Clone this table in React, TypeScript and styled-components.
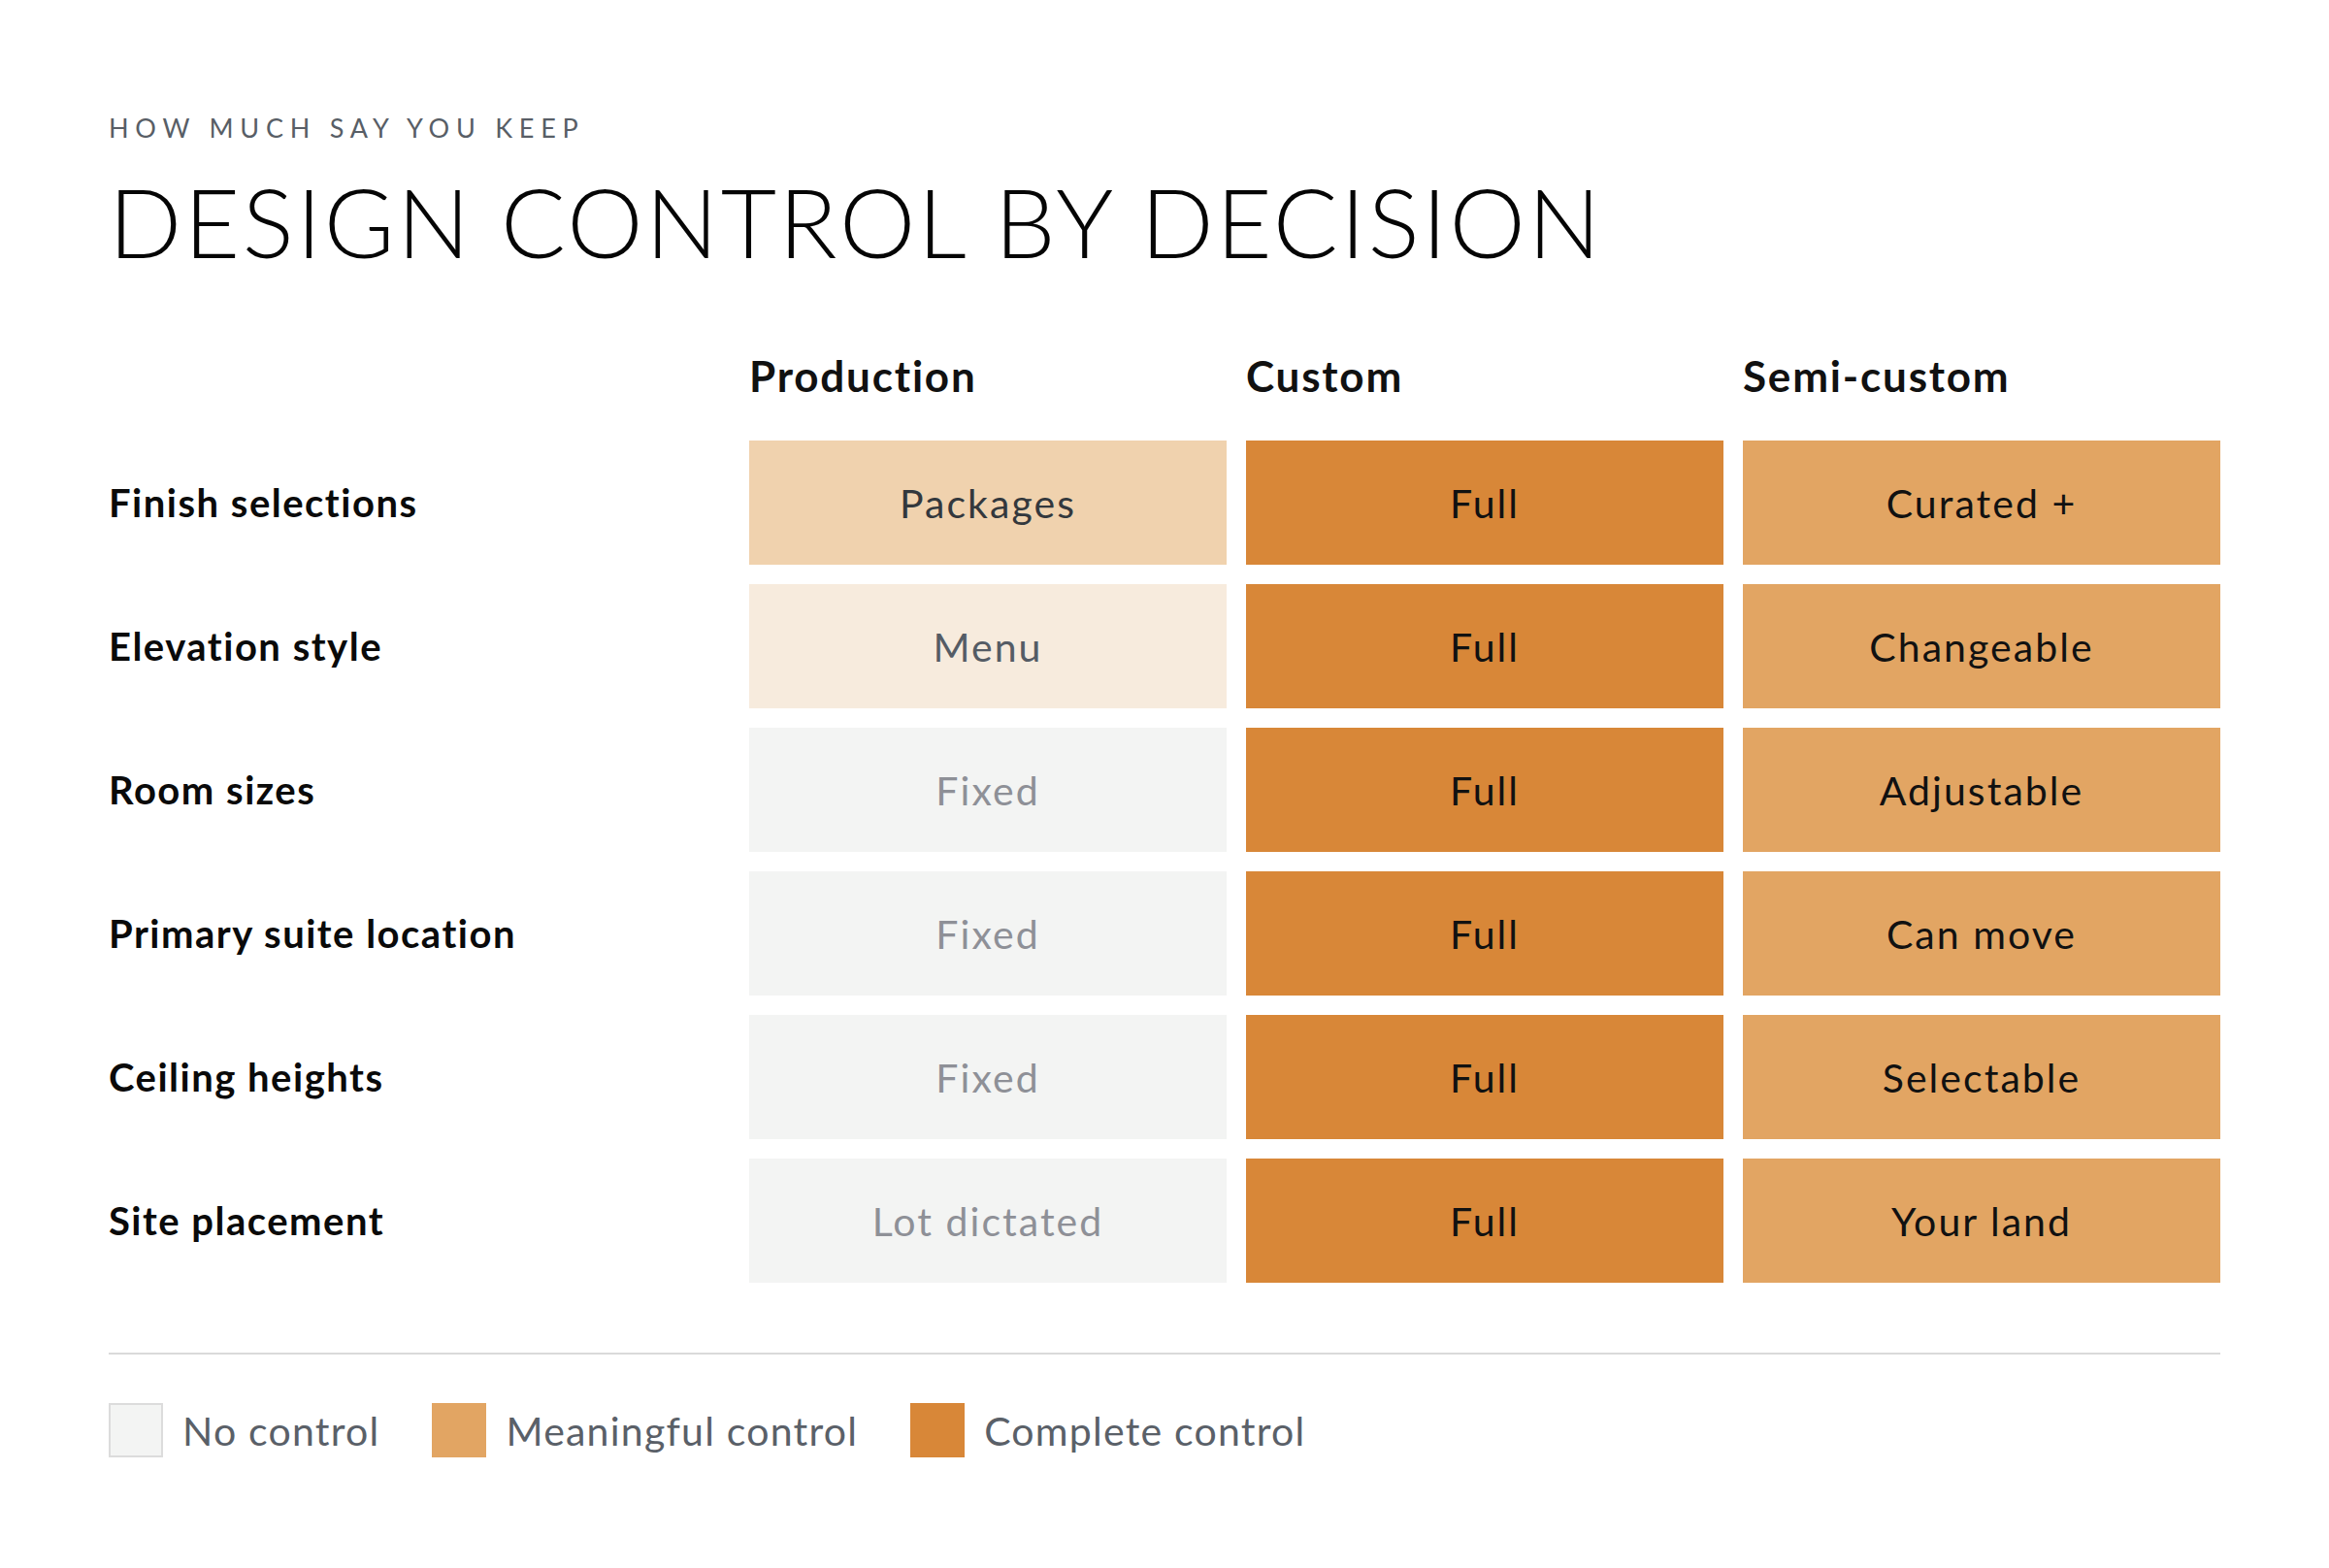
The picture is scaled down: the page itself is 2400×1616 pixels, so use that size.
import styled, { createGlobalStyle } from "styled-components"

const GlobalStyle = createGlobalStyle`
  html, body {
    margin: 0;
    padding: 0;
    background: #ffffff;
  }
  body {
    font-family: "Lato", "Noto Sans", sans-serif;
    color: #111111;
  }
`

// page wrapper, all content sits between x=112 and x=2288
const Page = styled.div`
  width: 2400px;
  min-height: 1616px;
  box-sizing: border-box;
  padding: 118px 112px 0;
`

const Eyebrow = styled.div`
  font-size: 27px;
  line-height: 1;
  letter-spacing: 0.25em;
  color: #585e66;
  text-transform: uppercase;
`

const Title = styled.h1`
  margin: 33px 0 0;
  font-size: 99px;
  line-height: 1;
  font-weight: 300;
  letter-spacing: 2.6px;
  color: #050505;
`

const Grid = styled.div`
  margin-top: 88px;
  display: grid;
  grid-template-columns: 1fr 492px 492px 492px;
  grid-template-rows: auto;
  grid-auto-rows: 128px;
  column-gap: 20px;
  row-gap: 20px;
`

const Row = styled.div`
  display: contents;
`

const Head = styled.div`
  font-size: 44px;
  line-height: 1;
  font-weight: 700;
  letter-spacing: 1.8px;
  padding-bottom: 25px;
  align-self: end;
`

const Label = styled.div`
  display: flex;
  align-items: center;
  font-size: 40px;
  font-weight: 700;
  letter-spacing: 1.5px;
  color: #0a0a0a;
`

type Level = "none" | "menu" | "packages" | "meaningful" | "complete"

const fills: Record<Level, { bg: string; fg: string }> = {
  none: { bg: "#f3f4f3", fg: "#8e9097" },
  menu: { bg: "#f7ebdd", fg: "#555c65" },
  packages: { bg: "#f0d2ae", fg: "#33383d" },
  meaningful: { bg: "#e2a563", fg: "#111111" },
  complete: { bg: "#d88738", fg: "#111111" },
}

const Cell = styled.div<{ $level: Level }>`
  display: flex;
  align-items: center;
  justify-content: center;
  font-size: 41px;
  letter-spacing: 0.05em;
  background: ${(p) => fills[p.$level].bg};
  color: ${(p) => fills[p.$level].fg};
`

const Divider = styled.hr`
  margin: 72px 0 0;
  border: none;
  height: 2px;
  background: #dadada;
`

const Legend = styled.div`
  margin-top: 50px;
  display: flex;
  align-items: center;
  gap: 54px;
`

const LegendItem = styled.div`
  display: flex;
  align-items: center;
  gap: 20px;
  font-size: 41px;
  letter-spacing: 0.03em;
  color: #5a6068;
`

const Swatch = styled.span<{ $level: Level }>`
  width: 52px;
  height: 52px;
  flex: none;
  background: ${(p) => fills[p.$level].bg};
  border: ${(p) => (p.$level === "none" ? "2px solid #dcdcdc" : "2px solid transparent")};
`

const rows: { label: string; cells: [string, Level][] }[] = [
  { label: "Finish selections", cells: [["Packages", "packages"], ["Full", "complete"], ["Curated +", "meaningful"]] },
  { label: "Elevation style", cells: [["Menu", "menu"], ["Full", "complete"], ["Changeable", "meaningful"]] },
  { label: "Room sizes", cells: [["Fixed", "none"], ["Full", "complete"], ["Adjustable", "meaningful"]] },
  { label: "Primary suite location", cells: [["Fixed", "none"], ["Full", "complete"], ["Can move", "meaningful"]] },
  { label: "Ceiling heights", cells: [["Fixed", "none"], ["Full", "complete"], ["Selectable", "meaningful"]] },
  { label: "Site placement", cells: [["Lot dictated", "none"], ["Full", "complete"], ["Your land", "meaningful"]] },
]

export default function App() {
  return (
    <>
      <GlobalStyle />
      <Page>
        <Eyebrow>How much say you keep</Eyebrow>
        <Title>DESIGN CONTROL BY DECISION</Title>

        <Grid>
          <Row>
            <Head />
            <Head>Production</Head>
            <Head>Custom</Head>
            <Head>Semi-custom</Head>
          </Row>
          {rows.map((row) => (
            <Row key={row.label}>
              <Label>{row.label}</Label>
              {row.cells.map(([text, level], i) => (
                <Cell key={i} $level={level}>
                  {text}
                </Cell>
              ))}
            </Row>
          ))}
        </Grid>

        <Divider />

        <Legend>
          <LegendItem>
            <Swatch $level="none" />
            No control
          </LegendItem>
          <LegendItem>
            <Swatch $level="meaningful" />
            Meaningful control
          </LegendItem>
          <LegendItem>
            <Swatch $level="complete" />
            Complete control
          </LegendItem>
        </Legend>
      </Page>
    </>
  )
}
